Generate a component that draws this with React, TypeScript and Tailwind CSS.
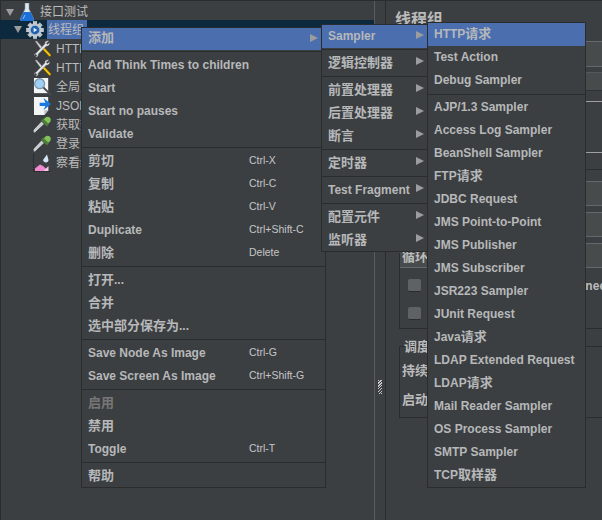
const FONT = "font-['Liberation_Sans','Noto_Sans_CJK_SC',sans-serif]";

function Mixed({ text }: { text: string }) {
  const parts = text.split(/([\u4e00-\u9fff]+)/).filter(Boolean);
  return (
    <>
      {parts.map((p, i) =>
        /[\u4e00-\u9fff]/.test(p) ? (
          <span key={i} className="text-[13px]">{p}</span>
        ) : (
          <span key={i}>{p}</span>
        )
      )}
    </>
  );
}

type Item = { l?: string; s?: string; a?: boolean; h?: boolean; d?: boolean; sep?: boolean; first?: boolean };

function Arrow({ x }: { x: string }) {
  return <span className={`absolute top-[6px] w-0 h-0 border-y-[4.5px] border-y-transparent border-l-[8px] border-l-[#9a9c9e] ${x}`} />;
}

function Menu({ items, cls, arrowX, shortcutX, firstCls, rowPad }: { items: Item[]; cls: string; arrowX: string; shortcutX?: string; firstCls: string; rowPad: string }) {
  return (
    <div className={`absolute bg-[#3c3f41] border border-[#2b2c2e] ${cls}`}>
      {items.map((it, i) =>
        it.sep ? (
          <div key={i} className={it.first ? "h-[3px] pt-px" : "h-[4px] pt-[2px]"}>
            <div className="h-px bg-[#2b2c2e]" />
          </div>
        ) : (
          <div
            key={i}
            className={`relative flex items-center whitespace-nowrap font-bold text-[12px] pl-[6px] ${it.h ? `bg-[#4b6eaf] ${firstCls}` : `h-[23px] ${rowPad}`} ${it.d ? "text-[#777777]" : "text-[#b6b8ba]"}`}
          >
            <Mixed text={it.l ?? ""} />
            {it.s && <span className={`absolute font-normal text-[10.5px] text-[#c4c6c8] ${shortcutX}`}>{it.s}</span>}
            {it.a && <Arrow x={arrowX} />}
          </div>
        )
      )}
    </div>
  );
}

const main: Item[] = [
  { l: "添加", a: true, h: true },
  { sep: true, first: true },
  { l: "Add Think Times to children" },
  { l: "Start" },
  { l: "Start no pauses" },
  { l: "Validate" },
  { sep: true },
  { l: "剪切", s: "Ctrl-X" },
  { l: "复制", s: "Ctrl-C" },
  { l: "粘贴", s: "Ctrl-V" },
  { l: "Duplicate", s: "Ctrl+Shift-C" },
  { l: "删除", s: "Delete" },
  { sep: true },
  { l: "打开..." },
  { l: "合并" },
  { l: "选中部分保存为..." },
  { sep: true },
  { l: "Save Node As Image", s: "Ctrl-G" },
  { l: "Save Screen As Image", s: "Ctrl+Shift-G" },
  { sep: true },
  { l: "启用", d: true },
  { l: "禁用" },
  { l: "Toggle", s: "Ctrl-T" },
  { sep: true },
  { l: "帮助" },
];

const second: Item[] = [
  { l: "Sampler", a: true, h: true },
  { sep: true, first: true },
  { l: "逻辑控制器", a: true },
  { sep: true },
  { l: "前置处理器", a: true },
  { l: "后置处理器", a: true },
  { l: "断言", a: true },
  { sep: true },
  { l: "定时器", a: true },
  { sep: true },
  { l: "Test Fragment", a: true },
  { sep: true },
  { l: "配置元件", a: true },
  { l: "监听器", a: true },
];

const third: Item[] = [
  { l: "HTTP请求", h: true },
  { l: "Test Action" },
  { l: "Debug Sampler" },
  { sep: true },
  ...[
    "AJP/1.3 Sampler",
    "Access Log Sampler",
    "BeanShell Sampler",
    "FTP请求",
    "JDBC Request",
    "JMS Point-to-Point",
    "JMS Publisher",
    "JMS Subscriber",
    "JSR223 Sampler",
    "JUnit Request",
    "Java请求",
    "LDAP Extended Request",
    "LDAP请求",
    "Mail Reader Sampler",
    "OS Process Sampler",
    "SMTP Sampler",
    "TCP取样器",
  ].map((l) => ({ l })),
];

function Flask() {
  return (
    <svg width="14" height="18" viewBox="0 0 14 18">
      <path d="M5 0h4v6l4.500 9.500c.5 1.300-.2 2.500-1.500 2.500H2C.7 18 0 16.800.5 15.500L5 6z" fill="#dfe8f0" stroke="#7a8f9f" strokeWidth="0.6" />
      <path d="M3.500 9h7l3 6.500c.5 1.300-.2 2.500-1.500 2.500H2C.7 18 0 16.800.5 15.500z" fill="#1c6fd6" />
      <path d="M5 12l-2 4" stroke="#8cc0f4" strokeWidth="1" />
    </svg>
  );
}
function Gear() {
  return (
    <svg width="18" height="18" viewBox="0 0 20 20">
      <g fill="#b9c1cb" stroke="#e6e9ee" strokeWidth="0.5">
        {[0, 45, 90, 135, 180, 225, 270, 315].map((r) => (
          <rect key={r} x="8" y="0.500" width="4" height="5" transform={`rotate(${r} 10 10)`} />
        ))}
        <circle cx="10" cy="10" r="7" />
      </g>
      <circle cx="10" cy="10" r="4.800" fill="#1e62b4" />
      <path d="M8.500 7.500l4 2.500-4 2.500z" fill="#e8f0fa" />
    </svg>
  );
}
function Tools() {
  return (
    <svg width="19" height="18" viewBox="0 0 20 19">
      <path d="M2 1l2 0 7 8-2 2z" fill="#d5d8dc" stroke="#55585a" strokeWidth="0.5" />
      <path d="M10 10l2-2 7 7.500c.6.800-1.200 2.800-2 2z" fill="#f4c20d" stroke="#3a3000" strokeWidth="0.6" />
      <path d="M17 1c-2-1-5 .5-4.500 3L3 14c-1 .1-2 1-2 2.500L3 15l1 1.500-1.500 1.500c2 .5 3.500-1 3-3l8.500-8.500c2.500.5 4-1.500 3.500-4L15.500 4.500 14 3.500z" fill="#e3e5e8" stroke="#4d5053" strokeWidth="0.5" />
    </svg>
  );
}
function Magnifier() {
  return (
    <svg width="19" height="18" viewBox="0 0 20 19">
      <rect x="1" y="0" width="15" height="16" fill="#f4f5f6" />
      <circle cx="7" cy="6" r="5.200" fill="#9fd0f4" stroke="#7d97ad" strokeWidth="1.400" />
      <path d="M11 10l8 8" stroke="#4a4d50" strokeWidth="2" />
    </svg>
  );
}
function JsonDoc() {
  return (
    <svg width="19" height="18" viewBox="0 0 20 19">
      <path d="M1 0h15v14l-4 5H1z" fill="#f2f4f6" />
      <path d="M12 19v-5h4z" fill="#b9bec3" />
      <path d="M11 1l8 6.500L11 14l2-4.500H7V6h6z" fill="#1a78e0" />
    </svg>
  );
}
function Dropper() {
  return (
    <svg width="19" height="18" viewBox="0 0 19 18">
      <path d="M0.500 17.500l2-1 9-8.500-3-3-8.500 9z" fill="#c9ccce" stroke="#2a2c2e" strokeWidth="0.8" />
      <path d="M8 4.500l6 6 2-2.500-5.500-5.500z" fill="#4e7d38" />
      <path d="M11 3.500c1-2.500 4-3.500 6-1.800 1.600 1.800.6 4.800-1.800 5.800z" fill="#83c25a" />
    </svg>
  );
}
function Chart() {
  return (
    <svg width="17" height="18" viewBox="0 0 17 18">
      <path d="M0.500 0v17.500H17" fill="none" stroke="#202327" strokeWidth="1" strokeDasharray="1.500 1" />
      <path d="M2 17v-2.500l5-4 3 1.500 5.500 5z" fill="#f08ad0" />
      <path d="M10 6l4-5.500 1.500 5.500c.3 3-5 3.500-5.500 0z" fill="#d6e6f6" />
      <path d="M15.500 12v5h-5z" fill="#f6c6e6" />
    </svg>
  );
}

const tree = [
  { icon: <Tools />, t: "HTTP信息头管理器" },
  { icon: <Tools />, t: "HTTP Cookie管理器" },
  { icon: <Magnifier />, t: "全局变量" },
  { icon: <JsonDoc />, t: "JSON提取器" },
  { icon: <Dropper />, t: "获取数据" },
  { icon: <Dropper />, t: "登录" },
  { icon: <Chart />, t: "察看结果树" },
];

function Caret() {
  return <span className="w-0 h-0 border-x-[4px] border-x-transparent border-t-[7px] border-t-[#9a9c9e]" />;
}

function Field({ h, mt, cls }: { h: string; mt: string; cls?: string }) {
  return <div className={`${h} ${mt} ${cls ?? "bg-[#484b4b] border-y border-y-[#65686a]"}`} />;
}

export default function App() {
  return (
    <div className={`${FONT} relative w-[602px] h-[520px] overflow-hidden bg-[#3c3f41] text-[#bbbbbb] flex border-t border-t-[#2b2c2e]`}>
      {/* tree pane */}
      <div className="w-[375px] h-full border-l border-l-[#2b2c2e] border-r border-r-[#5a5d5f] pt-px shrink-0">
        <div className="h-[18px] flex items-center text-[12px] pt-[2px]">
          <span className="ml-[5px] w-[14px] flex"><Caret /></span>
          <span className="w-[14px] flex"><Flask /></span>
          <span className="ml-[6px]">接口测试</span>
        </div>
        <div className="h-[19px] flex items-center text-[12px] bg-[#0d293e] -ml-px">
          <span className="ml-[14px] w-[11px] flex"><Caret /></span>
          <span className="w-[20px] flex pl-px"><Gear /></span>
          <span className="ml-[2px] bg-[#4b6eaf] h-full flex items-center pl-px w-[40px] whitespace-nowrap overflow-hidden">线程组</span>
        </div>
        {tree.map((r, i) => (
          <div key={i} className="h-[19px] flex items-center text-[12px] whitespace-nowrap">
            <span className="ml-[32px] w-[22px] flex">{r.icon}</span>
            <span className="ml-px">{r.t}</span>
          </div>
        ))}
      </div>

      {/* splitter */}
      <div className="w-[10px] h-full flex justify-center shrink-0 pt-[379px]">
        <div className="w-[4px] h-[14px] bg-[repeating-linear-gradient(135deg,#c8c8c8_0,#c8c8c8_1px,#3c3f41_1px,#3c3f41_2px)]" />
      </div>

      {/* editor pane */}
      <div className="flex-1 h-full border-l border-l-[#2b2c2e] pl-[13px] min-w-0">
        <div className="h-[40px] pt-[9px] text-[16px] font-bold leading-[20px] -ml-[4px]">线程组</div>
        <Field h="h-[26px]" mt="mt-0" />
        <Field h="h-[19px]" mt="mt-[5px]" cls="bg-[#484b4b] border-t border-t-[#55585a] border-b border-b-[#2e3032]" />
        <div className="h-px mt-[10px] bg-[#a0a0a0]" />
        <div className="h-px mt-[50px] bg-[#a0a0a0]" />
        <div className="h-px mt-[16px] bg-[#2b2c2e]" />
        <Field h="h-[25px]" mt="mt-[11px]" />
        <Field h="h-[25px]" mt="mt-[6px]" />
        <Field h="h-[25px]" mt="mt-[6px]" />

        {/* 循环 group */}
        <div className="-mt-[15px] h-[76px] border-l border-b border-[#2b2c2e] flex flex-col text-[12px] font-bold">
          <div className="h-[15px] -mt-[4px] pl-[2px] pt-[1px] leading-[14px] text-[13px]">循环控制器</div>
          <div className="h-[27px] mt-[8px] flex items-center gap-[7px] pl-[8px]">
            <span className="w-[13px] h-[13px] rounded-[2px] bg-[#5f6264] border-b border-b-[#2b2c2e] shrink-0" />
            <span className="whitespace-nowrap">Delay Thread creation until needed</span>
          </div>
          <div className="h-[27px] mt-px flex items-center gap-[7px] pl-[8px]">
            <span className="w-[13px] h-[13px] rounded-[2px] bg-[#5f6264] border-b border-b-[#2b2c2e] shrink-0" />
            <span className="whitespace-nowrap">调度器</span>
          </div>
        </div>

        {/* 调度器 group */}
        <div className="mt-[17px] h-[72px] border-l border-t border-b border-[#2b2c2e] flex flex-col text-[13px] font-bold">
          <div className="-mt-[8px] ml-[4px] h-[16px] leading-[16px] whitespace-nowrap">调度器配置</div>
          <div className="mt-[8px] ml-[2px] h-[16px] leading-[16px] whitespace-nowrap">持续时间（秒）</div>
          <div className="mt-[13px] ml-[2px] h-[16px] leading-[16px] whitespace-nowrap">启动延迟（秒）</div>
        </div>
      </div>

      {/* popup menus */}
      <Menu items={main} cls="left-[81px] top-[26px] w-[245px]" arrowX="left-[228px]" shortcutX="left-[167px]" firstCls="h-[22px] pb-[2px]" rowPad="pb-0" />
      <Menu items={second} cls="left-[321px] top-[23px] w-[107px]" arrowX="left-[94px]" firstCls="h-[23px] pb-[2px]" rowPad="pb-0" />
      <Menu items={third} cls="left-[427px] top-[21px] w-[159px]" arrowX="left-[140px]" firstCls="h-[23px] pb-px" rowPad="pb-[2px]" />
    </div>
  );
}
